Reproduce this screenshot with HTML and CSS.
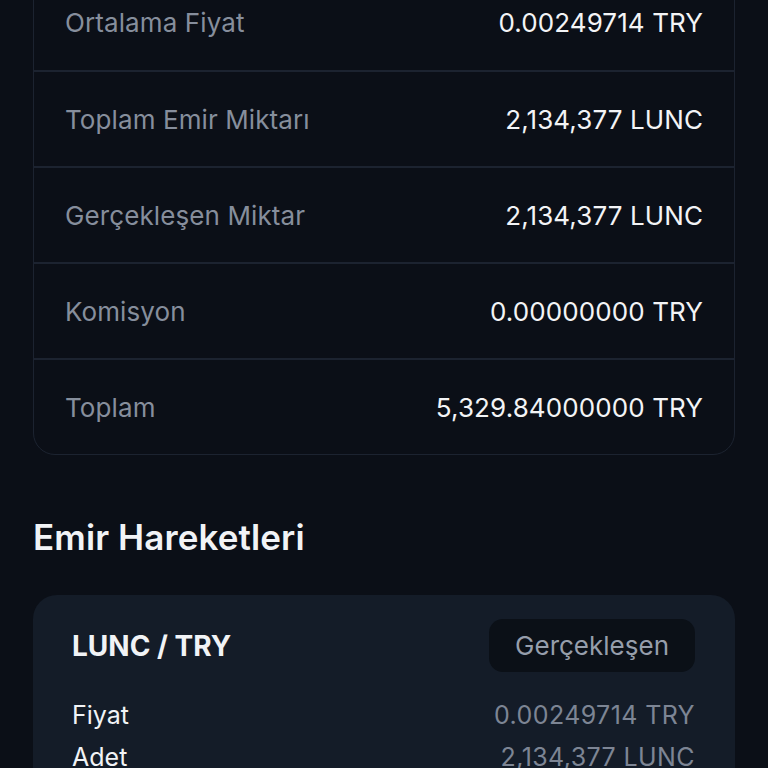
FILE: index.html
```html
<!DOCTYPE html>
<html>
    <head>
        <meta charset="utf-8">
        <title>Emir Detayı</title>
        <link rel="stylesheet" href="styles.css">
    </head>
    <body>
        <div class="page">
            <div class="summary">
                <div class="row">
                    <span class="label">Ortalama Fiyat</span>
                    <span class="value">0.00249714 TRY</span>
                </div>
                <div class="row">
                    <span class="label">Toplam Emir Miktarı</span>
                    <span class="value">2,134,377 LUNC</span>
                </div>
                <div class="row">
                    <span class="label">Gerçekleşen Miktar</span>
                    <span class="value">2,134,377 LUNC</span>
                </div>
                <div class="row">
                    <span class="label">Komisyon</span>
                    <span class="value">0.00000000 TRY</span>
                </div>
                <div class="row">
                    <span class="label">Toplam</span>
                    <span class="value">5,329.84000000 TRY</span>
                </div>
            </div>

            <h2 class="title">Emir Hareketleri</h2>

            <div class="trade">
                <div class="trade-head">
                    <span class="pair">LUNC / TRY</span>
                    <span class="badge">Gerçekleşen</span>
                </div>
                <div class="trade-line">
                    <span>Fiyat</span>
                    <span class="muted">0.00249714 TRY</span>
                </div>
                <div class="trade-line">
                    <span>Adet</span>
                    <span class="muted">2,134,377 LUNC</span>
                </div>
            </div>
        </div>
    </body>
</html>
```

FILE: styles.css
```css
html, body {
    margin: 0;
    padding: 0;
    background: #0b0f17;
    overflow: hidden;
}
body {
    font-family: Inter, "Noto Sans", sans-serif;
    color: #f1f3f6;
}
.page {
    padding: 0 33px;
}
.summary {
    margin-top: -27px;
    border: 1px solid #1c2330;
    border-radius: 22px;
}
.row {
    display: flex;
    justify-content: space-between;
    align-items: center;
    height: 94px;
    padding: 0 31px;
    border-top: 2px solid #1c2330;
}
.row:first-child {
    border-top: none;
    height: 96px;
}
.label {
    font-size: 26px;
    color: #868e9c;
    letter-spacing: 0.1px;
}
.value {
    font-size: 26px;
    color: #f3f4f6;
    letter-spacing: 0.1px;
}
.title {
    margin: 0;
    padding: 62px 0 0;
    height: 78px;
    font-size: 35px;
    font-weight: 600;
    line-height: 40px;
    letter-spacing: 0.1px;
}
.trade {
    background: #141c28;
    border-radius: 24px;
    padding: 24px 40px 0 39px;
    height: 200px;
}
.trade-head {
    display: flex;
    justify-content: space-between;
    align-items: center;
    margin-bottom: 22px;
}
.pair {
    font-size: 28px;
    font-weight: 700;
}
.badge {
    background: #0b1017;
    border-radius: 14px;
    padding: 0 26px;
    height: 53px;
    line-height: 53px;
    font-size: 26px;
    color: #969eab;
}
.trade-line {
    display: flex;
    justify-content: space-between;
    font-size: 25px;
    line-height: 42px;
}
.muted {
    color: #7d8594;
    letter-spacing: 0.4px;
}
```
